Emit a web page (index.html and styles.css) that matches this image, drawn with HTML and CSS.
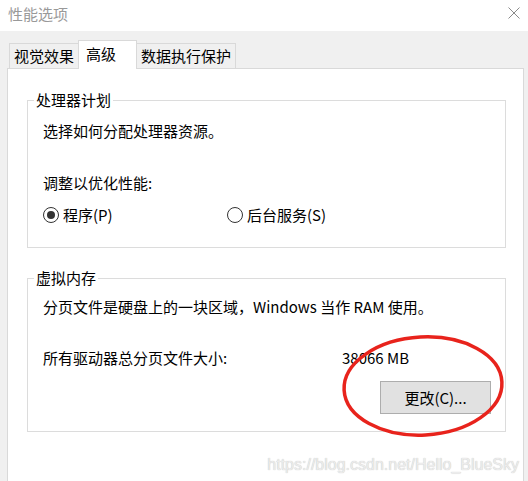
FILE: index.html
```html
<!DOCTYPE html>
<html lang="zh-CN">
<head>
    <meta charset="UTF-8">
    <title>性能选项</title>
    <link rel="stylesheet" href="styles.css">
</head>
<body>

<div class="title-bar">
    <span class="title">性能选项</span>
    <svg class="close" width="12" height="12" viewBox="0 0 12 12">
        <path d="M0.5 0.5 L11.5 11.5 M11.5 0.5 L0.5 11.5" stroke="#8a8a8a" stroke-width="1" fill="none"/>
    </svg>
</div>

<div class="tabs">
    <div class="tab">视觉效果</div>
    <div class="tab active">高级</div>
    <div class="tab">数据执行保护</div>
</div>

<div class="panel">
    <fieldset class="group">
        <legend>处理器计划</legend>
        <div class="group-body cpu">
            <p class="line">选择如何分配处理器资源。</p>
            <p class="line spaced">调整以优化性能:</p>
            <div class="radios">
                <div class="radio-item first">
                    <span class="radio checked"></span>
                    <span>程序(P)</span>
                </div>
                <div class="radio-item">
                    <span class="radio"></span>
                    <span>后台服务(S)</span>
                </div>
            </div>
        </div>
    </fieldset>

    <fieldset class="group">
        <legend>虚拟内存</legend>
        <div class="group-body memory">
            <p class="line">分页文件是硬盘上的一块区域，Windows 当作 RAM 使用。</p>
            <div class="size-row">
                <span class="size-label">所有驱动器总分页文件大小:</span>
                <span>38066 MB</span>
            </div>
            <div class="button-row">
                <button class="btn">更改(C)...</button>
            </div>
        </div>
    </fieldset>
</div>

<!-- red mark drawn over the button -->
<svg class="mark" width="180" height="120" viewBox="0 0 180 120">
    <ellipse cx="90" cy="60" rx="79" ry="49" fill="none" stroke="#e8231c" stroke-width="3.5" transform="rotate(-3 90 60)"/>
</svg>

<div class="watermark">https://blog.csdn.net/Hello_BlueSky</div>

</body>
</html>
```

FILE: styles.css
```css
body {
    margin: 0;
    height: 481px;
    overflow: hidden;
    background-color: #f0f0f0;
    font-family: "Noto Sans CJK SC", "Noto Sans", sans-serif;
    font-size: 15px;
    color: #000;
    position: relative;
}

.title-bar {
    height: 31px;
    background-color: #fff;
    display: flex;
    align-items: center;
    justify-content: space-between;
    padding: 0 8px 0 8px;
}

.title {
    color: #999;
    line-height: 20px;
    margin-top: -4px;
}

.close {
    margin-top: -6px;
}

/* Tabs */
.tabs {
    display: flex;
    align-items: flex-end;
    margin: 10px 0 0 9px;
    height: 28px;
}

.tab {
    height: 24px;
    line-height: 24px;
    padding: 0 4px;
    border: 1px solid #d9d9d9;
    border-bottom: none;
    background-color: #f0f0f0;
    margin-bottom: 1px;
}

.tab.active {
    height: 28px;
    line-height: 26px;
    padding: 0 20px 0 7px;
    background-color: #fff;
    margin: 0 -1px 0 -1px;
    position: relative;
    z-index: 1;
}

/* Main panel, runs off the bottom of the window */
.panel {
    margin: -1px 4px 0 7px;
    height: 391px;
    background-color: #fff;
    border: 1px solid #d9d9d9;
    border-bottom: none;
    padding-top: 21px;
}

.group {
    margin: 0 17px 20px 19px;
    padding: 0;
    border: 1px solid #dcdcdc;
    min-width: 0;
}

.group legend {
    margin-left: 6px;
    padding: 0 2px;
    line-height: 20px;
}

.group-body {
    padding: 0 15px;
}

.group-body.cpu {
    padding-top: 11px;
    padding-bottom: 22px;
}

.group-body.memory {
    padding-top: 9px;
    padding-bottom: 17px;
}

.line {
    margin: 0;
    line-height: 20px;
}

.spaced {
    margin-top: 32px;
}

.radios {
    display: flex;
    margin-top: 12px;
    line-height: 20px;
}

.radio-item {
    display: flex;
    align-items: center;
    gap: 4px;
}

.radio-item.first {
    width: 184px;
}

.radio {
    width: 14px;
    height: 14px;
    border: 1px solid #333;
    border-radius: 50%;
    display: flex;
    align-items: center;
    justify-content: center;
}

.radio.checked::after {
    content: "";
    width: 8px;
    height: 8px;
    border-radius: 50%;
    background-color: #333;
}

.size-row {
    display: flex;
    margin-top: 31px;
    line-height: 20px;
}

.size-label {
    width: 299px;
}

.button-row {
    display: flex;
    justify-content: flex-end;
    margin-top: 13px;
}

.btn {
    width: 111px;
    height: 33px;
    margin-right: -1px;
    background-color: #e1e1e1;
    border: 1px solid #adadad;
    font-family: "Noto Sans CJK SC", "Noto Sans", sans-serif;
    font-size: 15px;
    color: #000;
    padding: 0;
}

/* Overlays */
.mark {
    position: absolute;
    left: 333px;
    top: 326px;
}

.watermark {
    position: absolute;
    right: 9px;
    bottom: 7px;
    font-family: "Liberation Sans", Arial, sans-serif;
    font-size: 16px;
    color: #ececec;
    text-shadow: 0 0 1px #b8b8b8;
}
```
